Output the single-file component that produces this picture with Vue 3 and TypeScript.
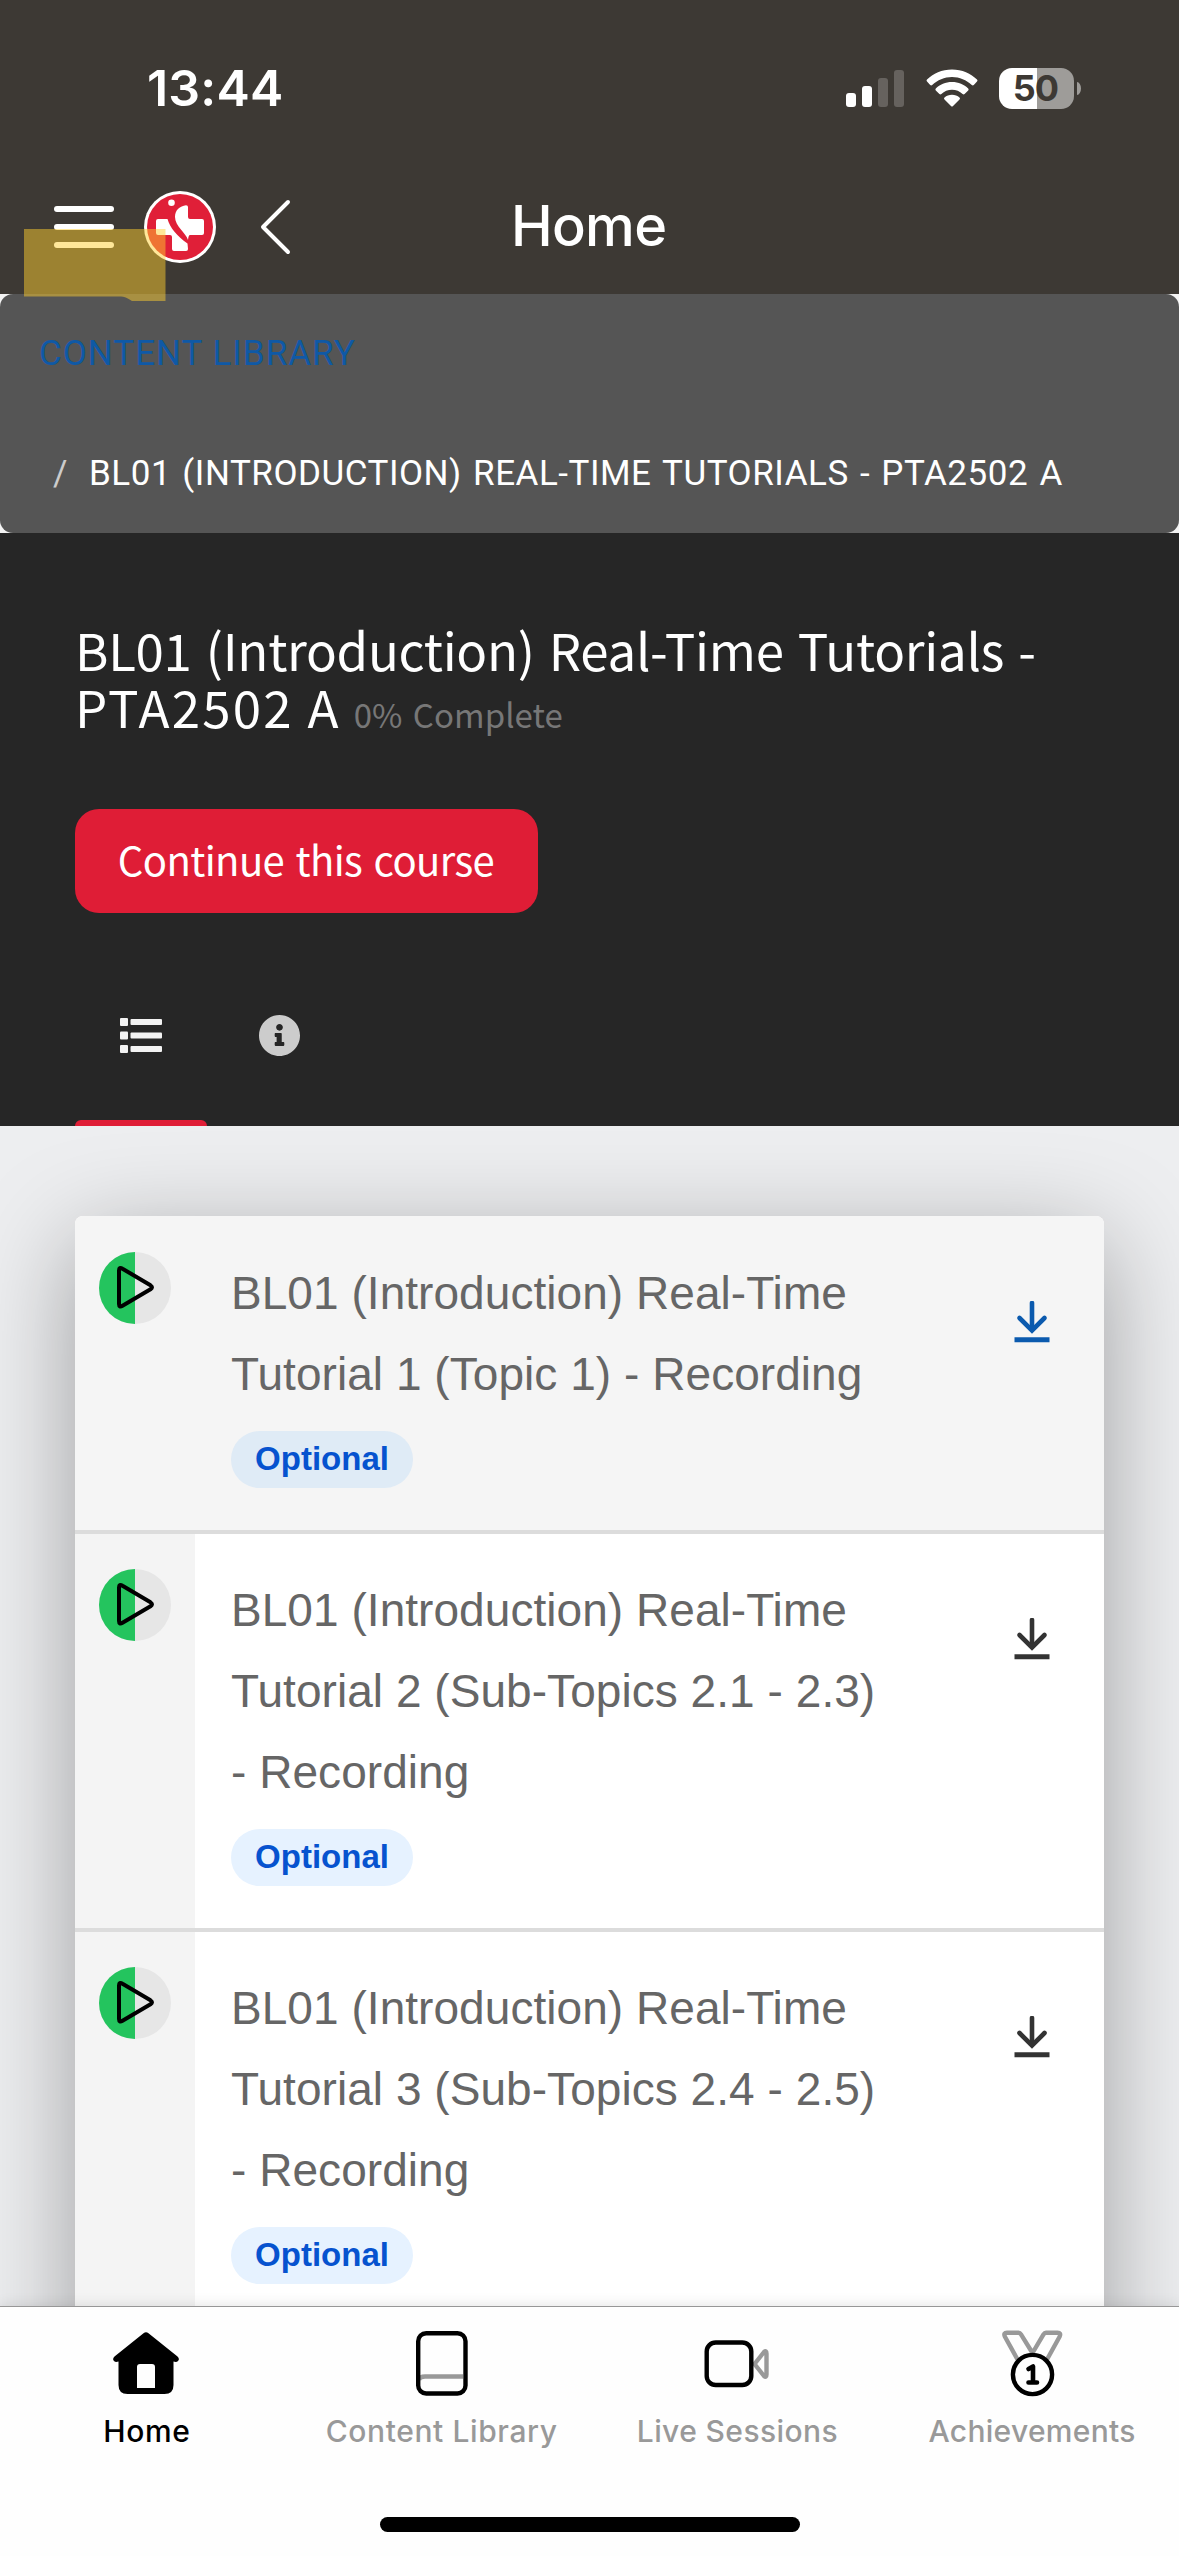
<script setup lang="ts">
interface Lesson {
  lines: string[]
  active: boolean
}

const lessons: Lesson[] = [
  { lines: ['BL01 (Introduction) Real-Time', 'Tutorial 1 (Topic 1) - Recording'], active: true },
  { lines: ['BL01 (Introduction) Real-Time', 'Tutorial 2 (Sub-Topics 2.1 - 2.3)', '- Recording'], active: false },
  { lines: ['BL01 (Introduction) Real-Time', 'Tutorial 3 (Sub-Topics 2.4 - 2.5)', '- Recording'], active: false },
]

const signal = [
  { h: 14, on: true },
  { h: 21, on: true },
  { h: 29, on: false },
  { h: 37, on: false },
]
</script>

<template>
  <div class="screen">
    <header class="top">
      <div class="status">
        <span class="time">13:44</span>
        <div class="status-icons">
          <div class="signal">
            <i v-for="(b, i) in signal" :key="i" :class="{ on: b.on }" :style="{ height: b.h + 'px' }"></i>
          </div>
          <svg class="wifi" width="52" height="38" viewBox="0 0 52 38" fill="#fff">
            <path d="M26 .5C16 .5 7 4.400 1 10.600q-1 1 0 2L4.200 16q1 .8 2 0C11.500 11 18.400 8 26 8s14.500 3 19.800 8q1 .8 2 0L51 12.600q1-1 0-2C45 4.400 36 .5 26 .5Z" />
            <path d="M26 13C19.500 13 13.900 15.500 9.800 19.500q-.9 1 0 2L13.400 25q1 .8 2 0C18.200 22.300 22 20.800 26 20.800s7.800 1.500 10.600 4.200q1 .8 2 0l3.600-3.500q.9-1 0-2C38.100 15.500 32.500 13 26 13Z" />
            <path d="M26 25.800c-2.900 0-5.500 1-7.500 2.600q-1.100 1 0 2L25 37q1 1 2 0l6.500-6.600q1.100-1 0-2C31.500 26.800 28.900 25.800 26 25.800Z" />
          </svg>
          <div class="battery"><span>50</span></div>
          <i class="nub"></i>
        </div>
      </div>

      <div class="nav">
        <div class="burger"><i></i><i></i><i></i></div>
        <svg class="logo" width="72" height="72" viewBox="0 0 72 72">
          <circle cx="36" cy="36" r="36" fill="#fff" />
          <circle cx="36" cy="36" r="33" fill="#e01f38" />
          <circle cx="27.500" cy="11.700" r="3.300" fill="#fff" />
          <path fill="#fff" d="M12 30q0-2 2-2H23.500C26 37 33 45 43.500 52.500L44 58q0 2-2 2H30q-2 0-2-2V46q0-2-2-2H14q-2 0-2-2Z" />
          <path fill="#fff" d="M44 16V26q0 2 2 2H58q2 0 2 2V42q0 2-2 2H46q-1.500 0-2 5C42 42 31 35 31 26C31 19 36 15 42 14.300q2 0 2 1.700Z" />
        </svg>
        <svg class="back" width="32" height="56" viewBox="0 0 32 56" fill="none" stroke="#fff" stroke-width="4" stroke-linecap="round" stroke-linejoin="round">
          <path d="M28 3L3 28L28 53" />
        </svg>
        <h1>Home</h1>
      </div>

      <svg class="marker" width="142" height="72" viewBox="0 0 142 72">
        <path d="M0 0H141.500V72H108Q101 67.600 97 67.600H0Z" fill="rgba(255,206,46,.49)" />
      </svg>
    </header>

    <div class="crumb-wrap">
      <nav class="crumbs">
        <a class="crumb link">CONTENT LIBRARY</a>
        <div class="crumb"><span class="slash">/</span><span class="here">BL01 (INTRODUCTION) REAL-TIME TUTORIALS - PTA2502 A</span></div>
      </nav>
    </div>

    <section class="hero">
      <h2>
        <span class="l1">BL01 (Introduction) Real-Time Tutorials -</span><br />
        <span class="l2">PTA2502 A</span><small>0% Complete</small>
      </h2>
      <button class="cta">Continue this course</button>
      <div class="tabs">
        <div class="tab active">
          <svg width="42" height="36" viewBox="0 0 42 36" fill="#f2f2f2">
            <rect x="0" y="0" width="8" height="8" rx="1" /><rect x="10.500" y="1" width="31.500" height="6" rx="1" />
            <rect x="0" y="13.500" width="8" height="8" rx="1" /><rect x="10.500" y="14.500" width="31.500" height="6" rx="1" />
            <rect x="0" y="27" width="8" height="8" rx="1" /><rect x="10.500" y="28" width="31.500" height="6" rx="1" />
          </svg>
        </div>
        <div class="tab second">
          <svg width="41" height="41" viewBox="0 0 512 512" fill="#ccc">
            <path d="M256 0C114.600 0 0 114.600 0 256s114.600 256 256 256 256-114.600 256-256S397.400 0 256 0zm0 112c23.200 0 42 18.800 42 42s-18.800 42-42 42-42-18.800-42-42 18.800-42 42-42zm60 260c0 6.600-5.400 16-12 16h-96c-6.600 0-12-9.400-12-16v-22c0-6.600 5.400-12 12-12h12v-64h-12c-6.600 0-12-5.400-12-12v-24c0-6.600 5.400-12 12-12h64c6.600 0 12 5.400 12 12v100h20c6.600 0 12 5.400 12 12z" />
          </svg>
        </div>
      </div>
    </section>

    <main class="content">
      <div class="card">
        <article v-for="(l, i) in lessons" :key="i" class="row" :class="{ active: l.active }">
          <div class="side">
            <svg width="72" height="72" viewBox="0 0 72 72">
              <circle cx="36" cy="36" r="36" fill="#e6e6e6" />
              <path d="M36 0A36 36 0 0 0 36 72Z" fill="#24c45e" />
              <path d="M20 18.500Q20 14.500 23.500 16.700L51.500 33.300Q54.500 35.300 51.500 37.300L23.500 53.700Q20 55.900 20 52Z" fill="none" stroke="#000" stroke-width="4" stroke-linejoin="round" />
            </svg>
          </div>
          <div class="body">
            <p v-for="t in l.lines" :key="t">{{ t }}</p>
            <span class="pill">Optional</span>
          </div>
          <svg class="dl" width="36" height="42" viewBox="0 0 36 42" fill="none" stroke="currentColor">
            <path d="M18 2V29" stroke-width="4.600" stroke-linecap="round" />
            <path d="M5.500 17L18 29.500L30.500 17" stroke-width="4.600" stroke-linecap="round" />
            <path d="M.5 38.700H35.500" stroke-width="5" />
          </svg>
        </article>
      </div>
    </main>

    <footer class="bar">
      <div class="items">
        <div class="item on">
          <svg width="68" height="68" viewBox="0 0 68 68">
            <path d="M31.500 3.200Q34 1.200 36.500 3.200L65.500 26.500Q68 29 66 31Q64.500 32.600 61.500 31.500V55Q61.500 64 52.500 64H15.500Q6.500 64 6.500 55V31.500Q3.500 32.600 2 31Q0 29 2.500 26.500ZM28 34Q25 34 25 37V58H43V37Q43 34 40 34Z" fill="#000" transform="translate(0 1)" />
          </svg>
          <span>Home</span>
        </div>
        <div class="item lib">
          <svg width="68" height="68" viewBox="0 0 68 68" fill="none" stroke-width="4.400">
            <path d="M11 51Q12 47.500 17 47.500H55" stroke="#999" />
            <rect x="10.200" y="4.200" width="47.300" height="60.300" rx="8" stroke="#000" />
          </svg>
          <span>Content Library</span>
        </div>
        <div class="item live">
          <svg width="68" height="68" viewBox="0 0 68 68" fill="none" stroke-width="4.400" stroke-linejoin="round">
            <path d="M51.500 35L61 23Q63.500 21 63.500 24.500V45.500Q63.500 49 61 47Z" stroke="#999" />
            <rect x="3.700" y="13.500" width="44.600" height="42.500" rx="9" stroke="#000" />
          </svg>
          <span>Live Sessions</span>
        </div>
        <div class="item ach">
          <svg width="68" height="68" viewBox="0 0 68 68" fill="none" stroke-width="4.400" stroke-linejoin="round">
            <path d="M19.500 30.500L6.800 7.500Q5.200 3.700 9 3.700H20.500Q22 3.700 23 5.300L34.500 24L45.500 5.300Q46.500 3.700 48 3.700H59.500Q63.300 3.700 61.700 7.500L49 30.500" stroke="#999" />
            <circle cx="34.500" cy="45.500" r="19.600" stroke="#000" />
            <path d="M30.500 40L35 37.500V53M30.500 53.500H39" stroke="#000" stroke-width="4.600" stroke-linecap="round" />
          </svg>
          <span>Achievements</span>
        </div>
      </div>
      <div class="indicator"></div>
    </footer>
  </div>
</template>

<style>
html, body { margin: 0; background: #fff; }
</style>

<style scoped>
.screen {
  width: 1179px;
  height: 2556px;
  overflow: hidden;
  display: flex;
  flex-direction: column;
  font-family: "Noto Sans CJK JP", "Noto Sans", sans-serif;
  background: #fff;
}
.screen svg { display: block; flex: none; }

.top {
  height: 294px;
  flex: none;
  background: #3d3934;
  position: relative;
  z-index: 2;
}
.status { height: 176px; display: flex; justify-content: space-between; box-sizing: border-box; padding: 0 98px 0 147px; align-items: center; }
.time { font: 600 50px/60px Inter, sans-serif; letter-spacing: .2px; color: #fff; }
.status-icons { display: flex; align-items: center; }
.signal { display: flex; align-items: flex-end; gap: 6px; height: 37px; }
.signal i { width: 10px; border-radius: 3px; background: #66625e; }
.signal i.on { background: #fff; }
.wifi { margin-left: 22px; }
.battery {
  margin-left: 21px;
  width: 75px;
  height: 41px;
  border-radius: 13px;
  background: linear-gradient(90deg, #fff 38px, #9e9c99 38px);
  display: flex;
  align-items: center;
  justify-content: center;
  padding-right: 2px;
  box-sizing: border-box;
}
.battery span { font: 700 36px/41px Inter, sans-serif; letter-spacing: -1px; color: #3d3934; }
.nub { width: 4px; height: 13px; margin-left: 3px; border-radius: 0 4px 4px 0 / 0 6.500px 6.500px 0; background: #9e9c99; }

.nav { height: 102px; display: flex; align-items: center; padding-left: 54px; }
.burger { width: 60px; display: flex; flex-direction: column; gap: 12px; }
.burger i { height: 6px; border-radius: 3px; background: #fff; }
.logo { margin-left: 30px; }
.back { margin-left: 44px; }
.nav h1 { margin: -3px 0 0 219px; font: 500 56px/70px Inter, sans-serif; letter-spacing: -.7px; color: #fff; }
.marker { position: absolute; left: 24px; top: 229px; }

.crumb-wrap { flex: none; height: 239px; background: #f4f4f4; }
.crumbs { height: 239px; border-radius: 13px; background: #555; box-sizing: border-box; padding: 0 0 0 39px; }
.crumb { display: flex; height: 120px; font: 400 35px/119px Roboto, sans-serif; color: #fff; white-space: pre; }
.crumb.link { color: #0f59a6; letter-spacing: 1px; }
.slash { color: #ccc; margin-left: 14px; width: 36px; }
.here { letter-spacing: .530px; word-spacing: 2px; }

.hero { flex: none; height: 593px; background: #262626; box-sizing: border-box; padding: 88px 0 0 75px; }
.hero h2 { margin: 0; font-weight: 400; font-size: 51px; line-height: 57px; color: #fff; height: 114px; white-space: nowrap; }
.l1 { letter-spacing: -.3px; word-spacing: 3px; }
.l2 { letter-spacing: 2.200px; }
.hero small { font-size: 33px; color: #777; letter-spacing: .05px; word-spacing: 3px; margin-left: 13px; line-height: 1; }
.cta {
  display: block;
  margin: 74px 0 0;
  width: 463px;
  height: 104px;
  border: 0;
  border-radius: 24px;
  background: #df1d36;
  color: #fff;
  font: 400 40px/98px "Noto Sans CJK JP", "Noto Sans", sans-serif;
  letter-spacing: -.6px;
  word-spacing: 3px;
  padding: 0 1px 5px 0;
}
.tabs { display: flex; height: 213px; }
.tab { width: 132px; display: flex; flex-direction: column; align-items: center; padding-top: 105px; box-sizing: border-box; position: relative; }
.tab.second { width: 144px; padding-top: 102px; }
.tab.active::after { content: ""; position: absolute; left: 0; right: 0; bottom: 0; height: 6px; border-radius: 6px 6px 0 0; background: #df1d36; }

.content { flex: 1; min-height: 0; overflow: hidden; padding: 90px 75px 0; background: #edeef0; }
.card { border-radius: 8px; background: #fff; box-shadow: 0 26px 100px rgba(0, 0, 0, .34); }
.row { display: flex; box-sizing: border-box; border-bottom: 4px solid #dcdcdc; height: 398px; align-items: flex-start; background: #fff; color: #333; }
.row:last-child { height: 520px; }
.row.active { height: 318px; padding-top: 1px; background: #f5f5f5; color: #0b5aae; border-radius: 8px 8px 0 0; }
.side { width: 120px; align-self: stretch; background: #f4f4f4; padding: 35px 0 0 24px; box-sizing: border-box; }
.row.active .side { background: none; }
.body { width: 784px; padding: 36px 0 0 36px; box-sizing: border-box; }
.body p { margin: 0; font: 400 46px/81px "Liberation Sans", Arial, sans-serif; letter-spacing: .05px; color: #666; white-space: nowrap; }
.pill {
  display: block;
  width: 182px;
  height: 57px;
  margin-top: 16px;
  border-radius: 29px;
  background: #e6f2ff;
  color: #0653cf;
  text-align: center;
  font: 700 33px/56px "Liberation Sans", Arial, sans-serif;
}
.row.active .pill { background: #dfebf6; }
.dl { margin: 84px 0 0 35px; }

.bar { flex: none; height: 250px; box-sizing: border-box; border-top: 1px solid #979797; background: #fefefe; box-shadow: 0 0 14px rgba(0, 0, 0, .12); position: relative; z-index: 1; }
.items { display: flex; height: 210px; }
.item { flex: 1; display: flex; flex-direction: column; align-items: center; padding-top: 22px; font: 450 30px/36px Inter, sans-serif; color: #999; letter-spacing: .6px; }
.item svg { margin-left: -1px; }
.item.on svg { margin-left: -3px; }
.item.live svg, .item.ach svg { margin-left: 1px; }
.item span { margin: 16px 0 0 -1px; }
.item.live span { margin-left: 1px; letter-spacing: .4px; }
.item.ach span { margin-left: 1px; letter-spacing: .3px; }
.item.on { color: #000; }
.indicator { width: 420px; height: 15px; border-radius: 8px; margin: 0 auto; background: #000; }
</style>
